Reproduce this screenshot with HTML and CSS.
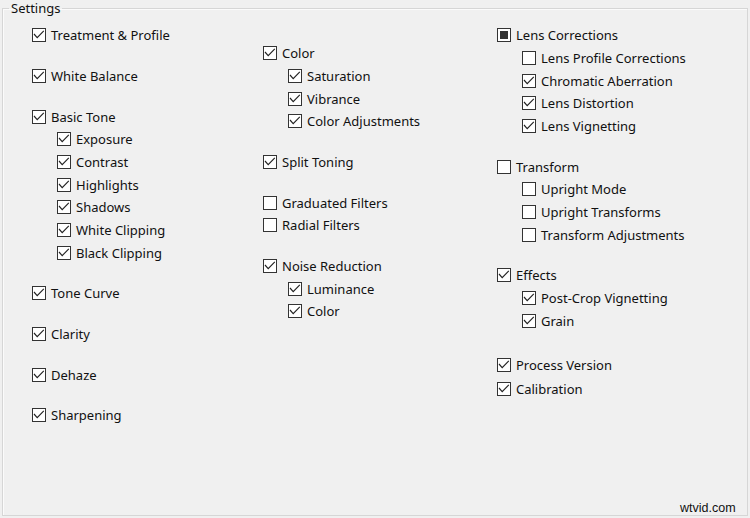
FILE: index.html
```html
<!DOCTYPE html>
<html>
<head>
<meta charset="utf-8">
<link rel="stylesheet" href="styles.css">
</head>
<body>
<fieldset class="group">
  <legend class="legend">Settings</legend>
  <div class="cols">
    <div class="col col1">
      <div class="grp"><div class="item"><span class="cb"><svg class="tick" viewBox="0 0 12 12"><polyline points="1,5 4.2,8.6 10.8,1.8"/></svg></span>Treatment &amp; Profile</div></div>
      <div class="grp"><div class="item"><span class="cb"><svg class="tick" viewBox="0 0 12 12"><polyline points="1,5 4.2,8.6 10.8,1.8"/></svg></span>White Balance</div></div>
      <div class="grp">
        <div class="item"><span class="cb"><svg class="tick" viewBox="0 0 12 12"><polyline points="1,5 4.2,8.6 10.8,1.8"/></svg></span>Basic Tone</div>
        <div class="item sub"><span class="cb"><svg class="tick" viewBox="0 0 12 12"><polyline points="1,5 4.2,8.6 10.8,1.8"/></svg></span>Exposure</div>
        <div class="item sub"><span class="cb"><svg class="tick" viewBox="0 0 12 12"><polyline points="1,5 4.2,8.6 10.8,1.8"/></svg></span>Contrast</div>
        <div class="item sub"><span class="cb"><svg class="tick" viewBox="0 0 12 12"><polyline points="1,5 4.2,8.6 10.8,1.8"/></svg></span>Highlights</div>
        <div class="item sub"><span class="cb"><svg class="tick" viewBox="0 0 12 12"><polyline points="1,5 4.2,8.6 10.8,1.8"/></svg></span>Shadows</div>
        <div class="item sub"><span class="cb"><svg class="tick" viewBox="0 0 12 12"><polyline points="1,5 4.2,8.6 10.8,1.8"/></svg></span>White Clipping</div>
        <div class="item sub"><span class="cb"><svg class="tick" viewBox="0 0 12 12"><polyline points="1,5 4.2,8.6 10.8,1.8"/></svg></span>Black Clipping</div>
      </div>
      <div class="grp"><div class="item"><span class="cb"><svg class="tick" viewBox="0 0 12 12"><polyline points="1,5 4.2,8.6 10.8,1.8"/></svg></span>Tone Curve</div></div>
      <div class="grp"><div class="item"><span class="cb"><svg class="tick" viewBox="0 0 12 12"><polyline points="1,5 4.2,8.6 10.8,1.8"/></svg></span>Clarity</div></div>
      <div class="grp"><div class="item"><span class="cb"><svg class="tick" viewBox="0 0 12 12"><polyline points="1,5 4.2,8.6 10.8,1.8"/></svg></span>Dehaze</div></div>
      <div class="grp"><div class="item"><span class="cb"><svg class="tick" viewBox="0 0 12 12"><polyline points="1,5 4.2,8.6 10.8,1.8"/></svg></span>Sharpening</div></div>
    </div>
    <div class="col col2">
      <div class="grp">
        <div class="item"><span class="cb"><svg class="tick" viewBox="0 0 12 12"><polyline points="1,5 4.2,8.6 10.8,1.8"/></svg></span>Color</div>
        <div class="item sub"><span class="cb"><svg class="tick" viewBox="0 0 12 12"><polyline points="1,5 4.2,8.6 10.8,1.8"/></svg></span>Saturation</div>
        <div class="item sub"><span class="cb"><svg class="tick" viewBox="0 0 12 12"><polyline points="1,5 4.2,8.6 10.8,1.8"/></svg></span>Vibrance</div>
        <div class="item sub"><span class="cb"><svg class="tick" viewBox="0 0 12 12"><polyline points="1,5 4.2,8.6 10.8,1.8"/></svg></span>Color Adjustments</div>
      </div>
      <div class="grp"><div class="item"><span class="cb"><svg class="tick" viewBox="0 0 12 12"><polyline points="1,5 4.2,8.6 10.8,1.8"/></svg></span>Split Toning</div></div>
      <div class="grp">
        <div class="item"><span class="cb"></span>Graduated Filters</div>
        <div class="item"><span class="cb"></span>Radial Filters</div>
      </div>
      <div class="grp">
        <div class="item"><span class="cb"><svg class="tick" viewBox="0 0 12 12"><polyline points="1,5 4.2,8.6 10.8,1.8"/></svg></span>Noise Reduction</div>
        <div class="item sub"><span class="cb"><svg class="tick" viewBox="0 0 12 12"><polyline points="1,5 4.2,8.6 10.8,1.8"/></svg></span>Luminance</div>
        <div class="item sub"><span class="cb"><svg class="tick" viewBox="0 0 12 12"><polyline points="1,5 4.2,8.6 10.8,1.8"/></svg></span>Color</div>
      </div>
    </div>
    <div class="col col3">
      <div class="grp">
        <div class="item"><span class="cb mixed"></span>Lens Corrections</div>
        <div class="item sub"><span class="cb"></span>Lens Profile Corrections</div>
        <div class="item sub"><span class="cb"><svg class="tick" viewBox="0 0 12 12"><polyline points="1,5 4.2,8.6 10.8,1.8"/></svg></span>Chromatic Aberration</div>
        <div class="item sub"><span class="cb"><svg class="tick" viewBox="0 0 12 12"><polyline points="1,5 4.2,8.6 10.8,1.8"/></svg></span>Lens Distortion</div>
        <div class="item sub"><span class="cb"><svg class="tick" viewBox="0 0 12 12"><polyline points="1,5 4.2,8.6 10.8,1.8"/></svg></span>Lens Vignetting</div>
      </div>
      <div class="grp">
        <div class="item"><span class="cb"></span>Transform</div>
        <div class="item sub"><span class="cb"></span>Upright Mode</div>
        <div class="item sub"><span class="cb"></span>Upright Transforms</div>
        <div class="item sub"><span class="cb"></span>Transform Adjustments</div>
      </div>
      <div class="grp">
        <div class="item"><span class="cb"><svg class="tick" viewBox="0 0 12 12"><polyline points="1,5 4.2,8.6 10.8,1.8"/></svg></span>Effects</div>
        <div class="item sub"><span class="cb"><svg class="tick" viewBox="0 0 12 12"><polyline points="1,5 4.2,8.6 10.8,1.8"/></svg></span>Post-Crop Vignetting</div>
        <div class="item sub"><span class="cb"><svg class="tick" viewBox="0 0 12 12"><polyline points="1,5 4.2,8.6 10.8,1.8"/></svg></span>Grain</div>
      </div>
      <div class="grp grp-pv">
        <div class="item"><span class="cb"><svg class="tick" viewBox="0 0 12 12"><polyline points="1,5 4.2,8.6 10.8,1.8"/></svg></span>Process Version</div>
        <div class="item item-cal"><span class="cb"><svg class="tick" viewBox="0 0 12 12"><polyline points="1,5 4.2,8.6 10.8,1.8"/></svg></span>Calibration</div>
      </div>
    </div>
  </div>
</fieldset>
<div class="watermark">wtvid.com</div>
</body>
</html>
```

FILE: styles.css
```css
html, body {
  margin: 0;
  padding: 0;
  width: 750px;
  height: 518px;
  overflow: hidden;
  background: #f0f0f0;
  font-family: "Noto Sans", "Open Sans", "DejaVu Sans", sans-serif;
  font-size: 13px;
  color: #111;
}

.group {
  box-sizing: border-box;
  margin: 0 2px 0 2px;
  height: 516px;
  border: 1px solid #d6d6d6;
  box-shadow: inset 1px 1px 0 #fbfbfb;
  padding: 0;
  min-width: 0;
}

.legend {
  padding: 0 2px;
  margin-left: 6px;
  line-height: 17px;
  font-size: 13px;
}

.cols {
  display: grid;
  grid-template-columns: 231px 234px 1fr;
  padding: 7px 0 0 29px;
}

.col2 { padding-top: 18px; }

.grp { margin-bottom: 18px; }

.item {
  display: flex;
  align-items: center;
  height: 22.67px;
  white-space: nowrap;
}

.item.sub { padding-left: 25px; }

.cb {
  box-sizing: border-box;
  flex: none;
  width: 14px;
  height: 14px;
  border: 1px solid #333;
  background: #fff;
  margin-right: 5px;
  position: relative;
}

.tick {
  display: block;
  width: 12px;
  height: 12px;
}

.tick polyline {
  fill: none;
  stroke: #222;
  stroke-width: 1.15;
}

.cb.mixed::after {
  content: "";
  position: absolute;
  left: 2px;
  top: 2px;
  width: 8px;
  height: 8px;
  background: #333;
}

.grp-pv { margin-top: 22px; }
.item-cal { margin-top: 1px; }

.watermark {
  position: absolute;
  left: 680px;
  top: 501px;
  font-family: "Liberation Sans", Arial, sans-serif;
  font-size: 12.5px;
  color: #111;
}
```
